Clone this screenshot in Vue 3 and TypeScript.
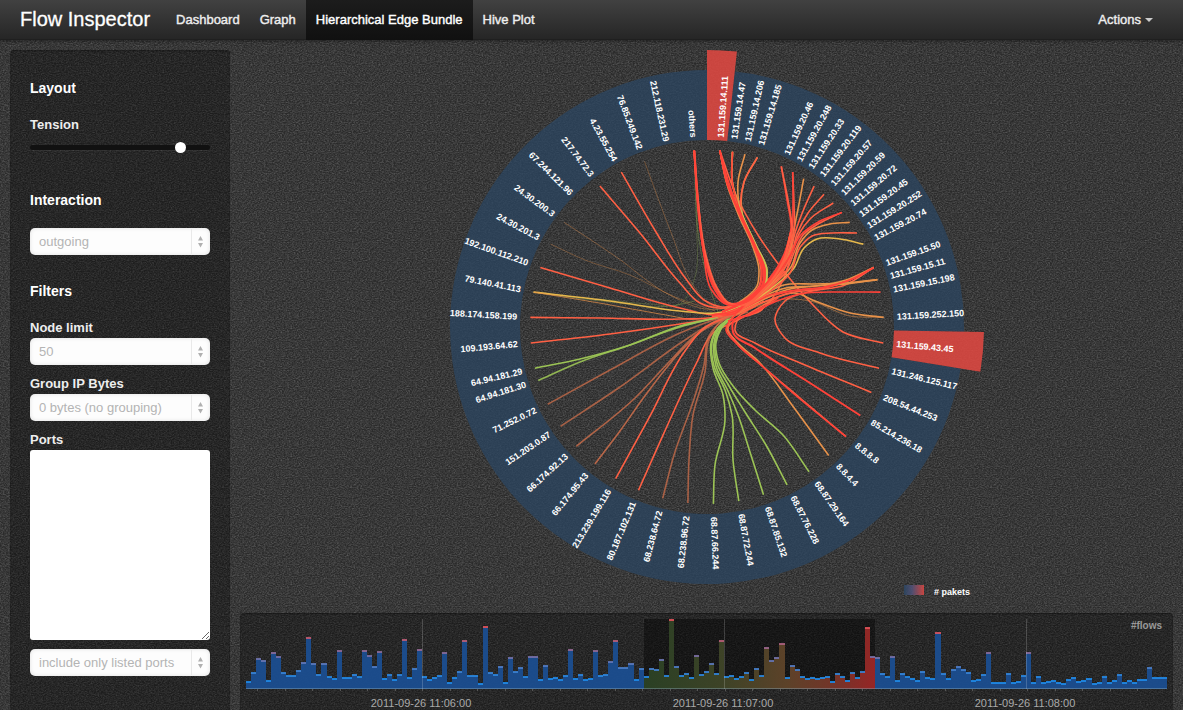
<script setup lang="ts">
import { ref } from 'vue'

type Point = [number, number]
interface Edge { d: string; color: string; width: number; opacity: number }

const CX = 707
const CY = 327
const STEP = 360 / 87

const navItems = ['Dashboard', 'Graph', 'Hierarchical Edge Bundle', 'Hive Plot']
const activeItem = 'Hierarchical Edge Bundle'

const tension = ref(86)
const interaction = ref('outgoing')
const nodeLimit = ref('50')
const grouping = ref('0 bytes (no grouping)')
const ports = ref('')
const portMode = ref('include only listed ports')

const slots: [number, string][] = [
  [1, '131.159.14.111'], [2, '131.159.14.47'], [3, '131.159.14.206'], [4, '131.159.14.185'],
  [6, '131.159.20.46'], [7, '131.159.20.248'], [8, '131.159.20.33'], [9, '131.159.20.119'],
  [10, '131.159.20.57'], [11, '131.159.20.59'], [12, '131.159.20.72'], [13, '131.159.20.45'],
  [14, '131.159.20.252'], [15, '131.159.20.74'], [17, '131.159.15.50'], [18, '131.159.15.11'],
  [19, '131.159.15.198'], [21, '131.159.252.150'], [23, '131.159.43.45'], [25, '131.246.125.117'],
  [27, '208.54.44.253'], [29, '85.214.236.18'], [31, '8.8.8.8'], [33, '8.8.4.4'],
  [35, '68.87.29.164'], [37, '68.87.76.228'], [39, '68.87.85.132'], [41, '68.87.72.244'],
  [43, '68.87.66.244'], [45, '68.238.96.72'], [47, '68.238.64.72'], [49, '80.187.102.131'],
  [51, '213.239.199.116'], [53, '66.174.95.43'], [55, '66.174.92.13'], [57, '151.203.0.87'],
  [59, '71.252.0.72'], [61, '64.94.181.30'], [62, '64.94.181.29'], [64, '109.193.64.62'],
  [66, '188.174.158.199'], [68, '79.140.41.113'], [70, '192.100.112.210'], [72, '24.30.201.3'],
  [74, '24.30.200.3'], [76, '67.244.121.96'], [78, '217.74.72.3'], [80, '4.23.55.254'],
  [82, '76.85.249.142'], [84, '212.118.231.29'], [86, 'others'],
]

const nodes = slots.map(([slot, name]) => {
  const angle = slot * STEP
  const flipped = angle > 180
  return {
    name,
    anchor: flipped ? 'end' : 'start',
    x: flipped ? -190 : 190,
    transform: `translate(${CX} ${CY}) rotate(${flipped ? angle + 90 : angle - 90})`,
  }
})

function polar(radius: number, slot: number): Point {
  const a = (slot * STEP * Math.PI) / 180
  return [CX + radius * Math.sin(a), CY - radius * Math.cos(a)]
}

function wedge(from: number, to: number, inner: number, outer: number): string {
  const large = to - from > 43.5 ? 1 : 0
  const p = (v: Point) => `${v[0].toFixed(2)} ${v[1].toFixed(2)}`
  return `M${p(polar(outer, from))}A${outer} ${outer} 0 ${large} 1 ${p(polar(outer, to))}` +
    `L${p(polar(inner, to))}A${inner} ${inner} 0 ${large} 0 ${p(polar(inner, from))}Z`
}

const arcs = [
  { d: wedge(1.5, 22, 187, 257), hot: false },
  { d: wedge(24, 87, 187, 257), hot: false },
  { d: wedge(0, 1.5, 187, 277), hot: true },
  { d: wedge(22, 24, 187, 277), hot: true },
]

// Smooth curve through all points, parameterised by chord length
function curve(pts: Point[]): string {
  const dist = (a: Point, b: Point) => Math.hypot(b[0] - a[0], b[1] - a[1]) || 1
  const slope = pts.map((b, i): Point => {
    const a = pts[i - 1]
    const c = pts[i + 1]
    if (!a) return [(c[0] - b[0]) / dist(b, c), (c[1] - b[1]) / dist(b, c)]
    if (!c) return [(b[0] - a[0]) / dist(a, b), (b[1] - a[1]) / dist(a, b)]
    const p = dist(a, b)
    const q = dist(b, c)
    const axis = (k: 0 | 1) => (((b[k] - a[k]) / p) * q + ((c[k] - b[k]) / q) * p) / (p + q)
    return [axis(0), axis(1)]
  })
  let d = `M${pts[0][0].toFixed(1)} ${pts[0][1].toFixed(1)}`
  for (let i = 0; i < pts.length - 1; i++) {
    const b = pts[i]
    const c = pts[i + 1]
    const t = dist(b, c) / 3
    d += `C${(b[0] + slope[i][0] * t).toFixed(1)} ${(b[1] + slope[i][1] * t).toFixed(1)} ` +
      `${(c[0] - slope[i + 1][0] * t).toFixed(1)} ${(c[1] - slope[i + 1][1] * t).toFixed(1)} ` +
      `${c[0].toFixed(1)} ${c[1].toFixed(1)}`
  }
  return d
}

const RED = '#ff4239'
const CORAL = '#ff6044'
const ORANGE = '#e8924a'
const YELLOW = '#e6b84c'
const LIME = '#c6c556'
const GREEN = '#9cc455'
const RUST = '#cf6f4b'

const edges: Edge[] = []
function add(slot: number, via: Point[], color: string, width = 1.6, opacity = 1) {
  edges.push({ d: curve([polar(177, slot), ...via]), color, width, opacity })
}

// faint links
add(82, [[672, 235], [693, 285], [712, 306], [740, 306]], ORANGE, 1, 0.35)
add(74, [[615, 256], [668, 294], [705, 309], [740, 307]], ORANGE, 1, 0.4)
add(72, [[585, 260], [630, 275], [675, 297], [715, 311]], ORANGE, 1, 0.35)
add(86, [[697, 230], [694, 280], [680, 304], [650, 304], [600, 299]], GREEN, 1, 0.25)
add(86, [[699, 240], [709, 285], [718, 312]], GREEN, 1, 0.35)
add(68, [[610, 302], [670, 306], [695, 301]], GREEN, 1, 0.3)

// western links
add(78, [[640, 233], [680, 283], [700, 303], [718, 308], [745, 303], [772, 276]], CORAL)
add(80, [[656, 232], [686, 279], [704, 300], [722, 307], [748, 300], [776, 272]], CORAL)
add(70, [[610, 288], [680, 308], [716, 315], [750, 306], [778, 276]], CORAL)
add(68, [[610, 301], [680, 311], [716, 313], [748, 304], [774, 280]], YELLOW)
add(68, [[605, 304], [660, 314], [705, 320], [738, 314]], ORANGE, 1, 0.7)
add(66, [[600, 318], [680, 319], [716, 317], [748, 306], [780, 275]], CORAL)
add(64, [[610, 334], [680, 324], [716, 318], [750, 308], [784, 272]], CORAL)
add(62, [[580, 359], [630, 345], [680, 326], [716, 318]], GREEN)
add(61, [[580, 362], [630, 345], [680, 327], [720, 317]], GREEN, 1.6, 0.9)
add(59, [[610, 370], [680, 333], [716, 319], [750, 308]], RUST, 1.6, 0.75)
add(57, [[620, 387], [685, 340], [716, 321], [745, 311]], RUST, 1.6, 0.75)
add(55, [[635, 398], [670, 361], [696, 335], [730, 316], [756, 303]], RUST, 1.6, 0.8)
add(53, [[620, 431], [647, 393], [683, 349], [714, 322], [745, 311]], RUST, 1.6, 0.85)
add(51, [[650, 416], [685, 351], [704, 328], [730, 316], [765, 298]], CORAL)
add(49, [[668, 424], [697, 362], [712, 334], [736, 321], [774, 299]], CORAL)
add(47, [[674, 455], [694, 399], [704, 365], [709, 336], [724, 320], [748, 312]], RUST, 1.6, 0.75)
add(45, [[689, 460], [693, 415], [705, 372], [709, 340], [720, 322], [745, 310]], RUST, 1.6, 0.75)

// southern links
add(43, [[715, 465], [725, 420], [723, 395], [713, 368], [711, 343], [717, 329], [728, 319]], GREEN)
add(41, [[733, 460], [732, 415], [725, 390], [714, 366], [712, 343], [718, 328], [729, 319]], GREEN)
add(39, [[750, 452], [738, 415], [728, 391], [716, 366], [714, 343], [719, 328], [729, 319]], GREEN)
add(37, [[766, 445], [745, 412], [729, 386], [717, 363], [715, 343], [720, 329], [730, 319]], GREEN)
add(35, [[783, 435], [755, 410], [733, 386], [719, 363], [716, 343], [721, 329], [731, 318]], GREEN)
add(33, [[792, 405], [760, 363], [735, 340], [727, 329], [732, 318], [754, 307]], ORANGE)

// south-eastern links
add(31, [[800, 398], [760, 364], [735, 341], [728, 328], [738, 317], [764, 301]], CORAL)
add(31, [[800, 399], [762, 366], [736, 343], [726, 330], [732, 318], [756, 306]], RED)
add(29, [[810, 383], [755, 348], [733, 332], [733, 322], [752, 314], [778, 298]], RED, 2)
add(27, [[805, 365], [755, 343], [735, 330], [737, 321], [760, 311], [784, 278], [793, 245]], CORAL)
add(25, [[820, 353], [784, 337], [775, 320], [785, 301], [808, 292], [845, 285], polar(177, 17)], CORAL)
add(23, [[843, 332], [812, 304], [783, 270], [758, 235], [736, 195], polar(177, 1)], CORAL)
add(21, [[850, 313], [815, 301], [795, 293], [770, 300], [736, 314]], ORANGE)
add(21, [[850, 316], [810, 301], [788, 299], [755, 307], [725, 315]], ORANGE, 1, 0.5)

// 131.159.15.x
add(17, [[850, 280], [820, 289], [790, 293], [764, 302], [740, 312], [718, 317]], CORAL)
add(17, [[850, 280], [822, 288], [792, 291], [766, 298], [742, 310], [718, 317]], RED)
add(17, [[846, 280], [816, 286], [786, 288], [762, 297], [738, 311], [716, 317]], ORANGE)
add(18, [[846, 283], [814, 284], [784, 285], [758, 298], [734, 310]], ORANGE)
add(18, [[846, 284], [814, 286], [786, 290], [762, 300], [738, 312]], ORANGE)
add(17, [[852, 279], [824, 287], [796, 290], [770, 295], [744, 308], [718, 316]], RED)
add(19, [[845, 292], [800, 294], [772, 303], [748, 315], [728, 321]], RED)

// 131.159.20.x
const north: [number, Point[], string][] = [
  [15, [[840, 239], [817, 239], [804, 248], [794, 268]], YELLOW],
  [13, [[830, 224], [812, 230], [800, 243], [791, 267]], ORANGE],
  [14, [[832, 233], [812, 236], [801, 246], [790, 273]], CORAL],
  [12, [[818, 224], [803, 235], [796, 248], [785, 273]], CORAL],
  [11, [[810, 219], [799, 234], [793, 250], [783, 271]], CORAL],
  [10, [[808, 213], [797, 234], [791, 256], [778, 277]], CORAL],
  [9, [[803, 211], [795, 233], [790, 253], [776, 278]], CORAL],
  [8, [[798, 209], [794, 229], [790, 249], [773, 281]], ORANGE],
  [7, [[794, 205], [794, 230], [787, 254], [771, 282]], CORAL],
  [7, [[793, 205], [792, 230], [785, 254], [770, 281]], RED],
  [6, [[787, 200], [791, 228], [785, 252], [768, 280]], RED],
  [6, [[788, 200], [792, 230], [787, 256], [772, 281]], CORAL],
  [12, [[820, 221], [800, 236], [790, 256], [774, 278]], RED],
]
north.forEach(([slot, pts, color], i) => {
  const [x, y] = pts[pts.length - 1]
  add(slot, [...pts, [x - 22, y + 20], [736, 309 + (i % 5)], [712, 315 + (i % 3)]], color)
})

// 131.159.14.x
const shifts: [number, number, string][] = [
  [1, -3, ORANGE], [1, -1, CORAL], [2, 2, CORAL], [2, 4, ORANGE], [3, 3, ORANGE], [4, 5, ORANGE],
  [1, 4, LIME], [4, 3, CORAL], [2, 5, LIME], [1, 0, RED], [2, 3, RED], [1, 2, RED],
]
for (const [slot, o, color] of shifts) {
  const near: Point = slot === 1 ? [727, 183 - o / 2] : slot === 2 ? [732, 180] : slot === 3 ? [738, 182] : [744, 182]
  add(slot, [near, [740 + o / 2, 215], [754 + o / 2, 246], [762 + o, 270], [760 + o, 286], [744 + o, 301], [722, 312]], color)
}

// bundles entering the centre from "others"
for (const o of [0, 1, 3]) {
  add(86, [[698, 200 + o], [705 + o / 2, 258], [714 + o, 288], [726 + o, 303], [743, 302 + o], [764, 286 + o], [783, 259 + o], [791, 232]],
    o === 3 ? CORAL : RED, 2)
}
add(86, [[699, 220], [704, 255], [711, 289], [728, 305], [750, 300], [764, 281], [757, 252], [740, 215], [728, 180], polar(177, 1)], RED)

// Flow counts, one bar for each interval
const flows = [
  22, 47, 89, 84, 25, 108, 96, 47, 40, 40, 53, 77, 152, 76, 42, 75, 37, 29, 115, 32, 32, 41, 36, 113,
  98, 65, 110, 31, 41, 28, 41, 146, 34, 61, 116, 35, 26, 32, 38, 109, 19, 33, 52, 143, 38, 38, 16, 185,
  47, 41, 67, 17, 94, 52, 63, 37, 95, 95, 26, 70, 30, 33, 28, 40, 117, 29, 42, 28, 31, 115, 40, 43,
  82, 143, 63, 62, 74, 26, 61, 37, 60, 56, 87, 40, 207, 67, 39, 45, 32, 98, 41, 52, 76, 46, 145, 37,
  40, 29, 37, 48, 26, 61, 38, 123, 83, 92, 135, 32, 69, 58, 37, 31, 34, 31, 33, 37, 21, 45, 37, 24,
  48, 33, 52, 183, 97, 92, 44, 36, 96, 25, 44, 35, 30, 23, 52, 33, 30, 167, 45, 29, 57, 65, 57, 48,
  25, 28, 42, 107, 19, 19, 17, 45, 19, 22, 38, 107, 17, 35, 18, 22, 24, 19, 16, 28, 32, 22, 25, 30,
  14, 18, 35, 18, 24, 41, 19, 24, 19, 26, 28, 62, 33, 33, 33,
]
const BASE = 70
const barWidth = 921 / flows.length
const mix = (a: number, b: number, t: number) => Math.round(a + (b - a) * t)
const bars = flows.map((v, i) => {
  const height = Math.round(v / 3)
  const t = Math.min(1, Math.max(0, (height - 10) / 48))
  return {
    x: i * barWidth,
    height,
    selected: i >= 79 && i < 125,
    cap: `rgb(${mix(30, 224, t)}, ${mix(138, 82, t)}, ${mix(232, 90, t)})`,
  }
})
const hours = [
  { x: 176, label: '2011-09-26 11:06:00' },
  { x: 478, label: '2011-09-26 11:07:00' },
  { x: 780, label: '2011-09-26 11:08:00' },
]
const ticks = Array.from({ length: 33 }, (_, i) => Math.round(11 + i * 27.5))
</script>

<template>
  <div class="page">
    <header class="navbar">
      <a class="brand" href="#">Flow Inspector</a>
      <nav class="nav">
        <a v-for="item in navItems" :key="item" href="#" class="nav-link" :class="{ active: item === activeItem }">{{ item }}</a>
      </nav>
      <button type="button" class="actions">Actions<span class="caret"></span></button>
    </header>

    <main class="content">
      <form class="sidebar" @submit.prevent>
        <section class="group">
          <h3>Layout</h3>
          <label for="tension">Tension</label>
          <input id="tension" v-model="tension" class="slider" type="range" min="0" max="100">
        </section>

        <section class="group">
          <h3 id="interaction-title">Interaction</h3>
          <div class="field">
            <select v-model="interaction" aria-labelledby="interaction-title">
              <option>outgoing</option>
              <option>incoming</option>
            </select>
            <svg class="stepper" viewBox="0 0 19 27" aria-hidden="true"><path d="M0.5 1V26" class="divider" /><path d="M9.5 8L12 12.500H7ZM9.500 19.500L12 15H7Z" /></svg>
          </div>
        </section>

        <section class="group">
          <h3>Filters</h3>
          <label for="limit">Node limit</label>
          <div class="field spaced">
            <select id="limit" v-model="nodeLimit"><option>50</option><option>100</option></select>
            <svg class="stepper" viewBox="0 0 19 27" aria-hidden="true"><path d="M0.5 1V26" class="divider" /><path d="M9.5 8L12 12.500H7ZM9.500 19.500L12 15H7Z" /></svg>
          </div>
          <label for="bytes">Group IP Bytes</label>
          <div class="field spaced">
            <select id="bytes" v-model="grouping"><option>0 bytes (no grouping)</option><option>1 byte</option></select>
            <svg class="stepper" viewBox="0 0 19 27" aria-hidden="true"><path d="M0.5 1V26" class="divider" /><path d="M9.5 8L12 12.500H7ZM9.500 19.500L12 15H7Z" /></svg>
          </div>
          <label for="ports">Ports</label>
          <textarea id="ports" v-model="ports"></textarea>
          <div class="field">
            <select v-model="portMode" aria-label="Port filter mode"><option>include only listed ports</option><option>exclude listed ports</option></select>
            <svg class="stepper" viewBox="0 0 19 27" aria-hidden="true"><path d="M0.5 1V26" class="divider" /><path d="M9.5 8L12 12.500H7ZM9.500 19.500L12 15H7Z" /></svg>
          </div>
        </section>
      </form>

      <div class="views">
        <svg class="bundle" viewBox="240 40 933 573" role="img" aria-label="Hierarchical edge bundle">
          <defs>
            <linearGradient id="packets"><stop offset="0" stop-color="#2b4662" /><stop offset="0.4" stop-color="#52527a" /><stop offset="1" stop-color="#e14842" /></linearGradient>
          </defs>
          <path v-for="(arc, i) in arcs" :key="'a' + i" :d="arc.d" class="arc" :class="{ hot: arc.hot }" />
          <path
            v-for="(edge, i) in edges" :key="'e' + i" class="edge" :d="edge.d"
            :stroke="edge.color" :stroke-width="edge.width" :stroke-opacity="edge.opacity"
          />
          <text
            v-for="node in nodes" :key="node.name" class="node-label" :x="node.x" y="3"
            :text-anchor="node.anchor" :transform="node.transform"
          >{{ node.name }}</text>
          <rect x="904" y="585" width="20" height="10" fill="url(#packets)" opacity="0.85" />
          <text class="node-label" x="934" y="595"># pakets</text>
        </svg>

        <section class="timeline">
          <svg viewBox="0 0 921 91" role="img" aria-label="Flows over time">
            <defs>
              <linearGradient id="selection" gradientUnits="userSpaceOnUse" x1="398" y1="0" x2="629" y2="0">
                <stop offset="0" stop-color="#2b4325" /><stop offset="0.35" stop-color="#414628" />
                <stop offset="0.62" stop-color="#62452a" /><stop offset="0.84" stop-color="#7d352a" /><stop offset="1" stop-color="#a02626" />
              </linearGradient>
            </defs>
            <rect class="brush" x="398" y="0" width="231" height="70" />
            <rect
              v-for="(bar, i) in bars" :key="'b' + i" :x="bar.x" :y="BASE - bar.height" :width="barWidth"
              :height="bar.height" :fill="bar.selected ? 'url(#selection)' : '#1b4f92'"
              opacity="0.93" shape-rendering="crispEdges"
            />
            <rect
              v-for="(bar, i) in bars" :key="'c' + i" :x="bar.x" :y="BASE - bar.height - 1" :width="barWidth"
              height="2" :fill="bar.cap" opacity="0.9" shape-rendering="crispEdges"
            />
            <rect class="axis" x="0" y="69" width="921" height="1" />
            <rect v-for="t in ticks" :key="t" class="tick" :x="t" y="70" width="1" height="2" />
            <g v-for="hour in hours" :key="hour.label">
              <rect class="grid-line" :x="hour.x" y="0" width="1" height="70" />
              <text class="axis-label" :x="hour.x - 1" y="88" text-anchor="middle">{{ hour.label }}</text>
            </g>
            <text class="unit" x="916" y="10" text-anchor="end">#flows</text>
          </svg>
        </section>
      </div>
    </main>
  </div>
</template>

<style>
body {
  margin: 0;
  background: #393939;
}
</style>

<style scoped>
.page {
  display: flex;
  flex-direction: column;
  height: 100vh;
  overflow: hidden;
  box-sizing: border-box;
  font-family: "Liberation Sans", Arial, sans-serif;
  font-size: 13px;
  color: #fff;
  background-color: #3a3a3a;
  background-image: url("data:image/svg+xml,%3Csvg xmlns='http://www.w3.org/2000/svg' width='128' height='128'%3E%3Cfilter id='n' x='0' y='0' width='100%25' height='100%25' color-interpolation-filters='sRGB'%3E%3CfeTurbulence type='fractalNoise' baseFrequency='.6 .9' numOctaves='2' stitchTiles='stitch'/%3E%3CfeColorMatrix values='.9 .9 0 0 -.68 .9 .9 0 0 -.68 .9 .9 0 0 -.68 0 0 0 0 .24'/%3E%3C/filter%3E%3Crect width='128' height='128' filter='url(%23n)'/%3E%3C/svg%3E"),
    repeating-linear-gradient(0deg, rgba(0, 0, 0, 0.06) 0 1px, transparent 1px 2px);
}

.navbar {
  display: flex;
  flex: none;
  height: 40px;
  background: linear-gradient(#414141, #252525);
  box-shadow: 0 1px 3px rgba(0, 0, 0, 0.4), inset 0 -1px 0 rgba(0, 0, 0, 0.15);
}

.brand {
  padding: 0 16px 0 20px;
  font-size: 20px;
  line-height: 38px;
  color: #fff;
  text-decoration: none;
  -webkit-text-stroke: 0.3px currentColor;
}

.nav {
  display: flex;
}

.nav-link,
.actions {
  padding: 0 10px;
  font: inherit;
  line-height: 39px;
  color: #eee;
  text-decoration: none;
  -webkit-text-stroke: 0.4px currentColor;
}

.nav-link.active {
  color: #fff;
  background: linear-gradient(#1c1c1c, #101010);
}

.actions {
  display: flex;
  align-items: center;
  gap: 4px;
  height: 39px;
  margin-left: auto;
  padding-right: 30px;
  background: none;
  border: 0;
}

.caret {
  border: 4px solid transparent;
  border-top-color: #ccc;
  border-bottom: 0;
}

.content {
  display: flex;
  flex: 1;
  gap: 10px;
  min-height: 0;
  padding: 0 10px;
}

.sidebar {
  flex: none;
  box-sizing: border-box;
  width: 220px;
  margin-top: 10px;
  padding: 20px;
  background: rgba(0, 0, 0, 0.3);
  border-radius: 4px 4px 0 0;
  box-shadow: inset 0 1px 2px rgba(0, 0, 0, 0.3);
}

.group {
  padding-bottom: 18px;
}

h3 {
  margin: 0 0 10px;
  font-size: 14px;
  line-height: 36px;
}

label {
  display: block;
  margin-bottom: 1px;
  font-weight: bold;
  line-height: 18px;
  color: #eee;
}

.slider {
  display: block;
  width: 100%;
  height: 18px;
  margin: 4px 0 8px;
  appearance: none;
  background: none;
}

.slider::-webkit-slider-runnable-track {
  height: 5px;
  background: #111;
  border-radius: 2px;
  box-shadow: 0 1px 0 rgba(255, 255, 255, 0.05);
}

.slider::-webkit-slider-thumb {
  width: 11px;
  height: 11px;
  margin-top: -3px;
  appearance: none;
  background: #fff;
  border-radius: 50%;
}

.field {
  position: relative;
  height: 27px;
}

.field.spaced {
  margin-bottom: 10px;
}

select {
  box-sizing: border-box;
  width: 100%;
  height: 27px;
  padding: 0 24px 0 9px;
  appearance: none;
  font: inherit;
  line-height: 25px;
  color: #b4b4b4;
  background: #fdfdfd;
  border: 0;
  border-radius: 5px;
  box-shadow: inset 0 0 4px rgba(0, 0, 0, 0.12);
}

.stepper {
  position: absolute;
  top: 0;
  right: 0;
  width: 19px;
  height: 27px;
  fill: #b0b0b0;
  pointer-events: none;
}

.divider {
  stroke: #e9e9e9;
}

textarea {
  display: block;
  box-sizing: border-box;
  width: 100%;
  height: 190px;
  margin: 0 0 9px;
  padding: 4px;
  font: inherit;
  background: #fff;
  border: 0;
  border-radius: 3px;
}

.views {
  display: flex;
  flex: 1;
  flex-direction: column;
  min-width: 0;
}

.bundle {
  flex: 1;
  width: 100%;
  min-height: 0;
}

.arc {
  fill: #2b4662;
  fill-opacity: 0.75;
}

.arc.hot {
  fill: #e14842;
  fill-opacity: 0.87;
}

.edge {
  fill: none;
}

.node-label {
  font-size: 9px;
  font-weight: bold;
  fill: #fff;
}

.timeline {
  flex: none;
  padding: 6px 6px 0;
  background: rgba(0, 0, 0, 0.3);
  border-radius: 4px 4px 0 0;
  box-shadow: inset 0 1px 2px rgba(0, 0, 0, 0.35);
}

.timeline svg {
  display: block;
  width: 100%;
}

.brush {
  fill: #000;
  fill-opacity: 0.4;
}

.axis {
  fill: #8fb0c0;
  fill-opacity: 0.4;
}

.tick {
  fill: #555;
}

.grid-line {
  fill: #fff;
  fill-opacity: 0.18;
}

.axis-label {
  font-size: 11px;
  fill: #aaa;
}

.unit {
  font-size: 10px;
  font-weight: bold;
  fill: #999;
}
</style>
